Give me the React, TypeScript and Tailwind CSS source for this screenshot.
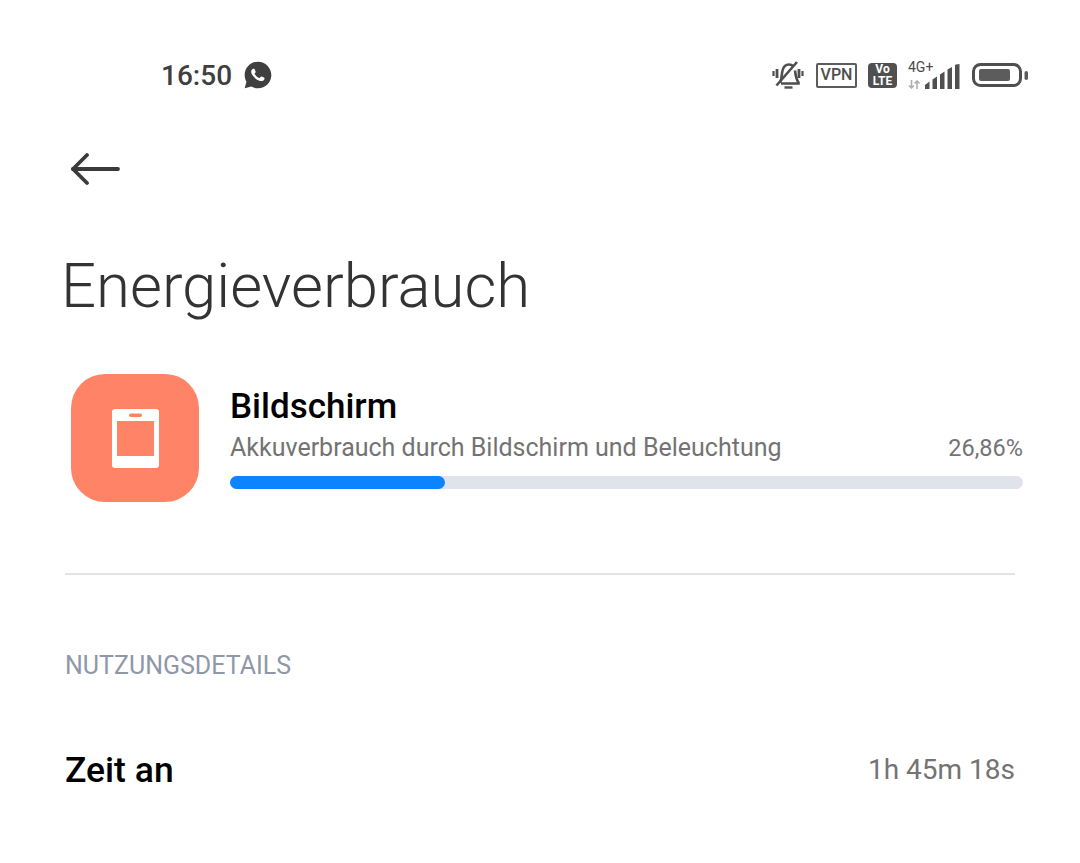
import { RiWhatsappFill } from "react-icons/ri";

function MuteBellIcon() {
  return (
    <svg width="32" height="30" viewBox="0 0 32 30" fill="none" stroke="#4f4f4f" strokeWidth="2.6">
      {/* bell */}
      <path d="M8 22.5 C10 19 9.5 14 10.5 10.5 C11.5 6.5 14 4.5 17 4.5 C18.5 4.5 20 5 21 6" />
      <path d="M23 10.5 C23.5 15 24 19 26.5 22.5 V23.5 H9" />
      <path d="M12.5 27.5 H20.5" strokeWidth="2.4" />
      {/* slash */}
      <path d="M4.5 25.5 L25 2" />
      {/* vibrate marks */}
      <path d="M5 9 V18" strokeWidth="2.8" />
      <path d="M1.5 11 V16" strokeWidth="2.2" />
      <path d="M27 9 V18" strokeWidth="2.8" />
      <path d="M30.5 11 V16" strokeWidth="2.2" />
    </svg>
  );
}

function SignalIcon() {
  return (
    <svg width="35" height="25" viewBox="0 0 35 25" fill="#505050">
      <path d="M0 25 V21 L4.5 17.5 V25 Z" />
      <path d="M7.5 25 V15.5 L12 12.5 V25 Z" />
      <path d="M15 25 V10.5 L19.5 7.5 V25 Z" />
      <path d="M22.5 25 V5.5 L27 3 V25 Z" />
      <path d="M30 25 V1.5 Q30 0.5 31 0.5 L34.5 0 V25 Z" />
    </svg>
  );
}

function DataArrowsIcon() {
  return (
    <svg width="12" height="9" viewBox="0 0 12 9" fill="none" stroke="#b0b0b0" strokeWidth="1.6">
      <path d="M3.5 0 V8 M1 5.5 L3.5 8 L6 5.5" />
      <path d="M9 9 V1 M6.5 3.5 L9 1 L11.5 3.5" />
    </svg>
  );
}

function BatteryIcon() {
  return (
    <svg width="57" height="25" viewBox="0 0 57 25" fill="none">
      <rect x="1.5" y="1.5" width="47" height="21" rx="7" stroke="#4f4f4f" strokeWidth="3" />
      <rect x="7" y="6" width="31" height="12" rx="2" fill="#5c5c5c" />
      <rect x="52.5" y="8" width="3.5" height="9" rx="1.75" fill="#5c5c5c" />
    </svg>
  );
}

function ScreenIcon() {
  return (
    <svg width="47" height="59" viewBox="0 0 47 59">
      <rect x="0" y="0" width="47" height="59" rx="3" fill="#fff" />
      <rect x="5" y="12" width="37" height="35" fill="#ff8467" />
      <rect x="17" y="4.5" width="13" height="3.5" rx="1.75" fill="#ff8467" />
    </svg>
  );
}

export default function App() {
  return (
    <div className="w-[1080px] h-[863px] bg-white overflow-hidden font-['Roboto',sans-serif]">

      {/* STATUS BAR */}
      <div className="flex items-center justify-between pt-[60px] pl-[161px] pr-[51px] h-[90px]">
        <div className="flex items-center gap-[12px] pt-[2px]">
          <span className="text-[28px] leading-[34px] font-medium text-[#3f3f3f]">16:50</span>
          <RiWhatsappFill className="w-[32px] h-[32px] -mt-[2px] -ml-[2px] text-[#3f3f3f]" />
        </div>

        <div className="flex items-center">
          <MuteBellIcon />
          <div className="ml-[12px] w-[41px] h-[25px] border-2 border-[#5c5c5c] rounded-[2px] flex items-center justify-center text-[16px] leading-none font-medium text-[#4f4f4f]">
            VPN
          </div>
          <div className="ml-[11px] w-[29px] h-[25px] bg-[#505050] rounded-[4px] flex flex-col items-center justify-center text-[12px] leading-[12px] font-bold text-white">
            <span>Vo</span>
            <span>LTE</span>
          </div>
          <div className="ml-[11px] relative w-[52px] h-[27px]">
            <span className="absolute left-0 top-[-2px] text-[14px] leading-[14px] text-[#4a4a4a]">4G+</span>
            <div className="absolute left-0 bottom-0 flex">
              <DataArrowsIcon />
            </div>
            <div className="absolute right-0 bottom-0 flex">
              <SignalIcon />
            </div>
          </div>
          <div className="ml-[12px]">
            <BatteryIcon />
          </div>
        </div>
      </div>

      {/* BACK */}
      <div className="pl-[71px] pt-[62px]">
        <svg width="49" height="34" viewBox="0 0 49 34" fill="none" stroke="#3a3a3a" strokeWidth="3.8" strokeLinecap="round" strokeLinejoin="round">
          <path d="M2 17 H47" />
          <path d="M16 3 L2 17 L16 31" />
        </svg>
      </div>

      {/* TITLE */}
      <h1 className="pl-[61px] mt-[64px] text-[61.7px] leading-[72px] font-light text-[#333]">
        Energieverbrauch
      </h1>

      {/* USAGE ROW */}
      <div className="flex items-start mt-[52px] pl-[71px] pr-[57px]">
        <div className="w-[128px] h-[128px] shrink-0 rounded-[34px] bg-[#ff8467] flex items-center justify-center">
          <ScreenIcon />
        </div>

        <div className="flex-1 ml-[31px] pt-[14px]">
          <div className="text-[35px] leading-[38px] font-medium text-black">Bildschirm</div>
          <div className="flex items-center justify-between mt-[6px] text-[#737373]">
            <span className="text-[25px] leading-[32px]">Akkuverbrauch durch Bildschirm und Beleuchtung</span>
            <span className="text-[23.5px] leading-[32px]">26,86%</span>
          </div>
          <div className="mt-[12px] h-[13px] rounded-full bg-[#dfe3ec]">
            <div className="h-full w-[27.1%] rounded-full bg-[#0d84ff]" />
          </div>
        </div>
      </div>

      {/* DIVIDER */}
      <div className="mx-[65px] mt-[71px] h-[2px] bg-[#e4e4e4]" />

      {/* DETAILS */}
      <div className="pl-[65px] mt-[76px] text-[25px] leading-[30px] text-[#8f97a8]">NUTZUNGSDETAILS</div>

      <div className="flex items-center justify-between mt-[69px] pl-[65px] pr-[65px]">
        <span className="text-[35.5px] leading-[40px] font-medium text-black">Zeit an</span>
        <span className="text-[28px] leading-[40px] text-[#737373]">1h 45m 18s</span>
      </div>
    </div>
  );
}
